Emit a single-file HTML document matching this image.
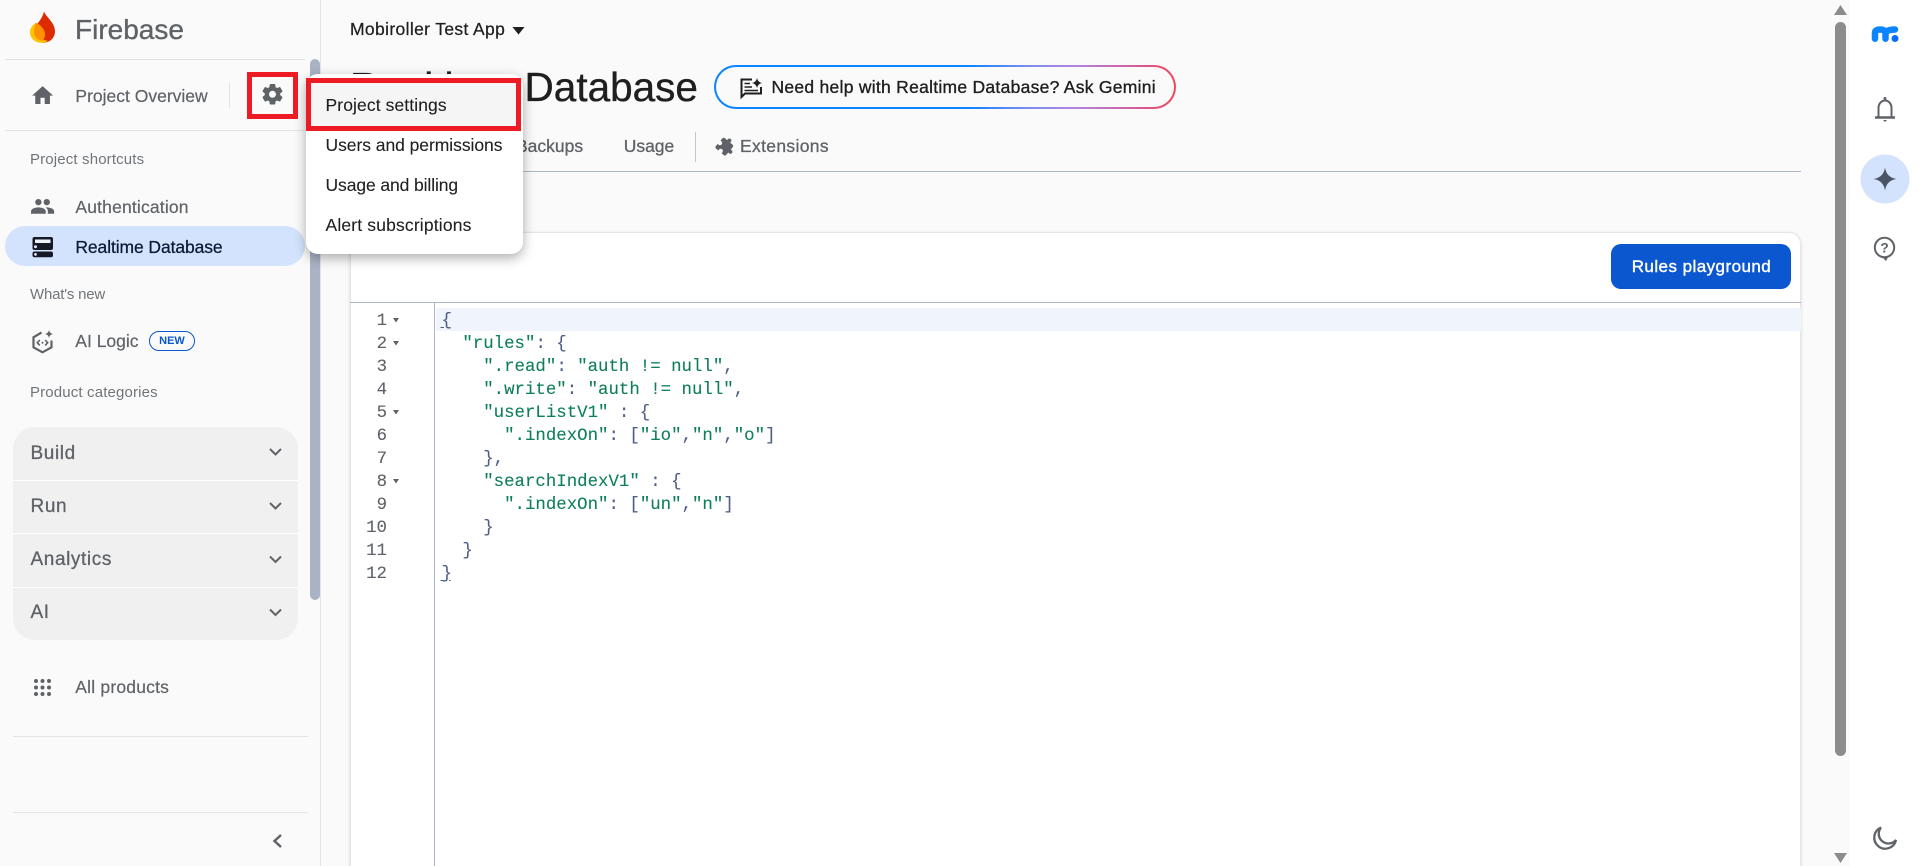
<!DOCTYPE html>
<html lang="en">
<head>
<meta charset="utf-8">
<title>Realtime Database - Firebase</title>
<style>
html,body{margin:0;padding:0;width:1919px;height:866px;overflow:hidden;background:#fafafa;font-family:"Liberation Sans",Arial,sans-serif}
#root{position:relative;width:1919px;height:866px;overflow:hidden;background:#fafafa}
.a{position:absolute}
.t{position:absolute;white-space:nowrap;line-height:1;font-size:17.5px;color:#5f6368;-webkit-text-stroke:.2px}
.h{font-size:15px;color:#70757a;-webkit-text-stroke:0}
.acc{font-size:19px;letter-spacing:.6px;left:30.5px;-webkit-text-stroke:.3px}
.m{color:#1f1f1f;left:325.5px;-webkit-text-stroke:.1px}
.tab{-webkit-text-stroke:.3px;top:138.3px}
svg{position:absolute;left:0;top:0;overflow:hidden}
.s{color:#0e7f56}
pre{margin:0;font-family:"Liberation Mono",monospace;font-size:17.4px;line-height:23px;color:#4c5f85;-webkit-text-stroke:.1px}
</style>
</head>
<body>
<div id="root">
<!-- sidebar -->
<div class="a" style="left:0;top:0;width:320px;height:866px;background:#fafafa;border-right:1px solid #e2e3e6"></div>
<div class="a" style="left:5px;top:59px;width:300px;height:1px;background:#e3e3e3"></div>
<div class="a" style="left:5px;top:130px;width:300px;height:1px;background:#e3e3ea"></div>
<div class="a" style="left:229px;top:83px;width:1px;height:25px;background:#e3e3e3"></div>
<div class="a" style="left:310px;top:59px;width:10px;height:541px;background:#aab2c5;border-radius:5px"></div>
<div class="a" style="left:5px;top:226px;width:300px;height:39.700px;background:#d3e3fd;border-radius:20px"></div>
<div class="a" style="left:13px;top:427px;width:285px;height:213px;background:#f0f0f0;border-radius:22px"></div>
<div class="a" style="left:13px;top:480px;width:285px;height:1px;background:#fff"></div>
<div class="a" style="left:13px;top:533px;width:285px;height:1px;background:#fff"></div>
<div class="a" style="left:13px;top:587px;width:285px;height:1px;background:#fff"></div>
<div class="a" style="left:13px;top:736px;width:295px;height:1px;background:#e3e3ea"></div>
<div class="a" style="left:13px;top:812px;width:295px;height:1px;background:#e3e3ea"></div>

<span class="t" style="left:75px;top:15.600px;font-size:28px;-webkit-text-stroke:.35px">Firebase</span>
<span class="t" style="left:75.400px;top:87.700px">Project Overview</span>
<span class="t h" style="left:30px;top:152.300px;letter-spacing:.15px">Project shortcuts</span>
<span class="t" style="left:75.400px;top:198.500px;letter-spacing:.17px">Authentication</span>
<span class="t" style="left:75.400px;top:238.500px;letter-spacing:-.1px;color:#0b1a33;-webkit-text-stroke:.25px">Realtime Database</span>
<span class="t h" style="left:30px;top:287.300px;letter-spacing:-.2px">What's new</span>
<span class="t" style="left:75.300px;top:333.200px">AI Logic</span>
<div class="a" style="left:149px;top:331px;width:44px;height:18px;border:1px solid #0b57d0;border-radius:11px;text-align:center;line-height:18px;font-size:11px;font-weight:bold;color:#0b57d0">NEW</div>
<span class="t h" style="left:30px;top:385.300px;letter-spacing:.15px">Product categories</span>
<span class="t acc" style="top:443.700px">Build</span>
<span class="t acc" style="top:496.500px">Run</span>
<span class="t acc" style="top:550.400px">Analytics</span>
<span class="t acc" style="top:603.200px">AI</span>
<span class="t" style="left:75.300px;top:679.200px;letter-spacing:.2px">All products</span>

<!-- header -->
<span class="t" style="left:350px;top:20.700px;letter-spacing:.35px;color:#1f1f1f;-webkit-text-stroke:.25px">Mobiroller Test App</span>
<span class="t" style="left:350px;top:66.700px;font-size:40.500px;color:#1f1f1f;word-spacing:3.500px;-webkit-text-stroke:.35px">Realtime Database</span>
<div class="a" style="left:714px;top:65px;width:462px;height:44px;border-radius:22px;background:linear-gradient(90deg,#0b84ff 0%,#0b84ff 55%,#7e8cf0 68%,#b085e0 78%,#d0609f 90%,#f0475c 100%)">
  <div class="a" style="left:2px;top:2px;width:458px;height:40px;border-radius:20px;background:#fafafa"></div>
</div>
<span class="t" style="left:771.500px;top:79.200px;letter-spacing:.27px;color:#1f1f1f;-webkit-text-stroke:.35px">Need help with Realtime Database? Ask Gemini</span>
<span class="t tab" style="left:430px">Rules</span>
<span class="t tab" style="left:516px">Backups</span>
<span class="t tab" style="left:623.700px">Usage</span>
<div class="a" style="left:695px;top:132px;width:1px;height:30px;background:#c4c7c5"></div>
<span class="t tab" style="left:740px;letter-spacing:.33px">Extensions</span>
<div class="a" style="left:350px;top:170.500px;width:1451px;height:1.500px;background:#aeb6c7"></div>

<!-- card -->
<div class="a" style="left:350px;top:232px;width:1451px;height:650px;background:#fff;border:1px solid #e6e6e6;box-sizing:border-box;border-radius:12px;box-shadow:0 1px 3px rgba(0,0,0,.15)"></div>
<div class="a" style="left:350px;top:302px;width:1451px;height:1px;background:#aeb6c7"></div>
<div class="a" style="left:434px;top:303px;width:1px;height:563px;background:#aeb6c7"></div>
<div class="a" style="left:436px;top:308px;width:1365px;height:23px;background:#eff4fd"></div>
<div class="a" style="left:1611px;top:244px;width:180px;height:44.700px;background:#0b57d0;border-radius:10px"></div>
<span class="t" style="left:1631.700px;top:258.200px;font-size:17px;color:#fff;letter-spacing:.45px;-webkit-text-stroke:.4px">Rules playground</span>

<pre class="a" style="left:340px;top:310px;width:47px;text-align:right;color:#5f6368">1
2
3
4
5
6
7
8
9
10
11
12</pre>
<pre class="a" style="left:441.500px;top:310px">{
  <span class="s">"rules"</span>: {
    <span class="s">".read"</span>: <span class="s">"auth != null"</span>,
    <span class="s">".write"</span>: <span class="s">"auth != null"</span>,
    <span class="s">"userListV1"</span> : {
      <span class="s">".indexOn"</span>: [<span class="s">"io"</span>,<span class="s">"n"</span>,<span class="s">"o"</span>]
    },
    <span class="s">"searchIndexV1"</span> : {
      <span class="s">".indexOn"</span>: [<span class="s">"un"</span>,<span class="s">"n"</span>]
    }
  }
}</pre>

<!-- right rail -->
<div class="a" style="left:1850px;top:0;width:69px;height:866px;background:#fff"></div>
<div class="a" style="left:1835px;top:22px;width:11px;height:734px;background:#8c8c8c;border-radius:5.500px"></div>

<svg width="1919" height="866" viewBox="0 0 1919 866" xmlns="http://www.w3.org/2000/svg">
  <!-- firebase flame -->
  <g transform="translate(0 -.8)">
  <path d="M44 12C45 17 55 23 55 32C55 39 49.500 43.500 43 43.500C36 43.500 33 38 33 33C33 27 42 22 44 12Z" fill="#dd2c00"/>
  <path d="M36 23.500C32.500 25.500 30 29 30 33C30 39 35 43.500 41 43.500C44 43.500 46 43 48 41.500C41 41 36 36 36 30Z" fill="#ffc400"/>
  <path d="M36 23.500C40 25 45 30 45 35C45 38 44 40 42.500 41.500C37 41 33.500 37 34 32C34.300 29 35 26 36 23.500Z" fill="#ff9100"/>
  </g>

  <!-- bracket match marks -->
  <path d="M440.500 327.500H444M449 327.500H450.500M440.500 580.500H444M449 580.500H450.500" stroke="#4c5f85" stroke-width="1" fill="none"/>

  <!-- home -->
  <g transform="translate(30 83) scale(1.05)" fill="#5f6368"><path d="M10 20v-6h4v6h5v-8h3L12 3 2 12h3v8z"/></g>
  <!-- gear -->
  <g transform="translate(260 81.800) scale(1.04)" fill="#5f6368" stroke="#5f6368" stroke-width=".5"><path d="M19.140 12.940c.04-.3.06-.61.06-.94 0-.32-.02-.64-.07-.94l2.030-1.580c.18-.14.23-.41.12-.61l-1.920-3.320c-.12-.22-.37-.29-.59-.22l-2.390.96c-.5-.38-1.030-.7-1.620-.94l-.36-2.540c-.04-.24-.24-.41-.48-.41h-3.840c-.24 0-.43.17-.47.41l-.36 2.540c-.59.24-1.130.57-1.620.94l-2.390-.96c-.22-.08-.47 0-.59.22L2.740 8.870c-.12.21-.08.47.12.61l2.030 1.580c-.05.3-.09.63-.09.94s.02.64.07.94l-2.030 1.580c-.18.14-.23.41-.12.61l1.920 3.320c.12.22.37.29.59.22l2.390-.96c.5.38 1.030.7 1.620.94l.36 2.540c.05.24.24.41.48.41h3.840c.24 0 .44-.17.47-.41l.36-2.540c.59-.24 1.130-.56 1.620-.94l2.390.96c.22.08.47 0 .59-.22l1.920-3.320c.12-.22.07-.47-.12-.61l-2.010-1.580zM12 15.600c-1.980 0-3.600-1.620-3.600-3.600s1.620-3.600 3.600-3.600 3.600 1.620 3.600 3.600-1.620 3.600-3.600 3.600z"/></g>
  <!-- people -->
  <g transform="translate(30 193.750) scale(1.05)" fill="#5f6368"><path d="M16 11c1.660 0 2.990-1.340 2.990-3S17.660 5 16 5c-1.660 0-3 1.340-3 3s1.340 3 3 3zm-8 0c1.660 0 2.990-1.340 2.990-3S9.660 5 8 5C6.340 5 5 6.340 5 8s1.340 3 3 3zm0 2c-2.330 0-7 1.170-7 3.500V19h14v-2.500c0-2.330-4.670-3.500-7-3.500zm8 0c-.29 0-.62.02-.97.05 1.160.84 1.970 1.970 1.970 3.450V19h6v-2.500c0-2.330-4.670-3.500-7-3.500z"/></g>
  <!-- database -->
  <rect x="32.500" y="237" width="20.500" height="13" rx="2" fill="#161a26"/>
  <rect x="35" y="239.500" width="15.500" height="3.500" fill="#eef2fb"/>
  <circle cx="35.500" cy="246.800" r="1.500" fill="#dfe8fa"/>
  <rect x="32.500" y="251.500" width="20.500" height="5.800" rx="2" fill="#161a26"/>
  <circle cx="35.500" cy="254.400" r="1.400" fill="#dfe8fa"/>
  <!-- AI logic -->
  <g fill="none" stroke="#5f6368" stroke-width="2.200">
    <path d="M41.500 332.500L33.500 337.300V347.300L42.500 352.300L51.500 347.300V340.500"/>
    <path d="M39.800 340L37.300 342.700L39.800 345.400M45.200 340L47.700 342.700L45.200 345.400" stroke-width="1.600"/>
  </g>
  <circle cx="42.500" cy="342.700" r="1" fill="#5f6368"/>
  <path d="M49 330Q49.600 333.400 53 334Q49.600 334.600 49 338Q48.400 334.600 45 334Q48.400 333.400 49 330Z" fill="#5f6368"/>
  <!-- chevrons -->
  <g fill="none" stroke="#5f6368" stroke-width="2">
    <path d="M270 449L275.500 454.500L281 449"/>
    <path d="M270 503L275.500 508.500L281 503"/>
    <path d="M270 556.500L275.500 562L281 556.500"/>
    <path d="M270 609.500L275.500 615L281 609.500"/>
    <path d="M281 835L274.500 841L281 847" stroke-width="2.500"/>
  </g>
  <!-- grid -->
  <g fill="#5f6368">
    <circle cx="36" cy="681" r="2"/><circle cx="42.500" cy="681" r="2"/><circle cx="49" cy="681" r="2"/>
    <circle cx="36" cy="687.500" r="2"/><circle cx="42.500" cy="687.500" r="2"/><circle cx="49" cy="687.500" r="2"/>
    <circle cx="36" cy="694" r="2"/><circle cx="42.500" cy="694" r="2"/><circle cx="49" cy="694" r="2"/>
  </g>
  <!-- project dropdown -->
  <path d="M512.500 27H524.500L518.500 34.500Z" fill="#1f1f1f"/>
  <!-- gemini note -->
  <g transform="translate(0 -1)">
  <g fill="none" stroke="#1f1f1f" stroke-width="2">
    <path d="M752 80.500H741.500V98L745 94.500H761V88"/>
    <path d="M744.500 84.500H750M744.500 88H752M744.500 91.500H758" stroke-width="1.600"/>
  </g>
  <path d="M757 79Q757.800 83.200 762 84Q757.800 84.800 757 89Q756.200 84.800 752 84Q756.200 83.200 757 79Z" fill="#1f1f1f"/>
  </g>
  <!-- extension -->
  <g transform="translate(726 146.500) rotate(40) scale(.8) translate(-12 -12)" fill="#5f6368"><path d="M20.500 11H19V7c0-1.100-.9-2-2-2h-4V3.500C13 2.120 11.880 1 10.500 1S8 2.120 8 3.500V5H4c-1.100 0-1.990.9-1.990 2v3.800H3.500c1.490 0 2.700 1.210 2.700 2.700s-1.210 2.700-2.700 2.700H2V20c0 1.100.9 2 2 2h3.800v-1.500c0-1.490 1.210-2.700 2.700-2.700 1.490 0 2.700 1.210 2.700 2.700V22H17c1.100 0 2-.9 2-2v-4h1.500c1.380 0 2.500-1.120 2.500-2.500S21.880 11 20.500 11z"/></g>
  <!-- fold arrows -->
  <g fill="#5f6368">
    <path d="M393 318H399L396 322.500Z"/>
    <path d="M393 341H399L396 345.500Z"/>
    <path d="M393 410H399L396 414.500Z"/>
    <path d="M393 479H399L396 483.500Z"/>
  </g>
  <!-- scrollbar arrows -->
  <path d="M1840.500 5L1847 15H1834Z" fill="#8c8c8c"/>
  <path d="M1834 853H1847L1840.500 863Z" fill="#8c8c8c"/>
  <!-- mobiroller logo -->
  <path d="M1875 38.700V33Q1875 29.500 1880 29.500Q1885.500 29.500 1885.500 33.500V38.700M1885.500 34Q1886 29.500 1895 29.500" fill="none" stroke="#0a84ff" stroke-width="6.500" stroke-linecap="round"/>
  <circle cx="1895" cy="38.500" r="3.500" fill="#0a6cff"/>
  <!-- bell -->
  <g fill="none" stroke="#5f6368" stroke-width="2">
    <path d="M1878.500 117V108A6.500 7.500 0 0 1 1891.500 108V117"/>
    <path d="M1875 117.500H1895" stroke-width="2.500"/>
  </g>
  <circle cx="1885" cy="98.500" r="1.500" fill="#5f6368"/>
  <path d="M1883 120H1887L1885 122Z" fill="#5f6368"/>
  <!-- gemini spark -->
  <circle cx="1885" cy="179" r="24.500" fill="#d3e3fd"/>
  <path d="M1885 167.500Q1886.500 177.500 1896.500 179Q1886.500 180.500 1885 190.500Q1883.500 180.500 1873.500 179Q1883.500 177.500 1885 167.500Z" fill="#4a5568"/>
  <!-- help -->
  <circle cx="1884.500" cy="247.500" r="9.700" fill="none" stroke="#5f6368" stroke-width="2"/>
  <path d="M1882.500 257.500L1886 261L1888.500 256.500" fill="#5f6368"/>
  <text x="1884.500" y="252.500" text-anchor="middle" font-family="Liberation Sans, sans-serif" font-size="14" font-weight="bold" fill="#5f6368">?</text>
  <!-- moon -->
  <path d="M1881 827.500A11 11 0 1 0 1896 840A9 9 0 0 1 1881 827.500Z" fill="none" stroke="#5f6368" stroke-width="2.300"/>
</svg>

<!-- settings menu -->
<div class="a" style="left:305.500px;top:74px;width:217.500px;height:180px;background:#fff;border-radius:12px;box-shadow:0 4px 12px rgba(0,0,0,.32)"></div>
<div class="a" style="left:306px;top:78px;width:215px;height:53px;background:#f5f5f5;border:5px solid #ed1c24;box-sizing:border-box"></div>
<div class="a" style="left:247px;top:72px;width:51px;height:47px;border:5px solid #ed1c24;box-sizing:border-box"></div>
<span class="t m" style="top:96.600px;letter-spacing:.1px">Project settings</span>
<span class="t m" style="top:136.500px;letter-spacing:-.05px">Users and permissions</span>
<span class="t m" style="top:176.800px;letter-spacing:-.1px">Usage and billing</span>
<span class="t m" style="top:216.700px;letter-spacing:.16px">Alert subscriptions</span>
</div>
</body>
</html>
